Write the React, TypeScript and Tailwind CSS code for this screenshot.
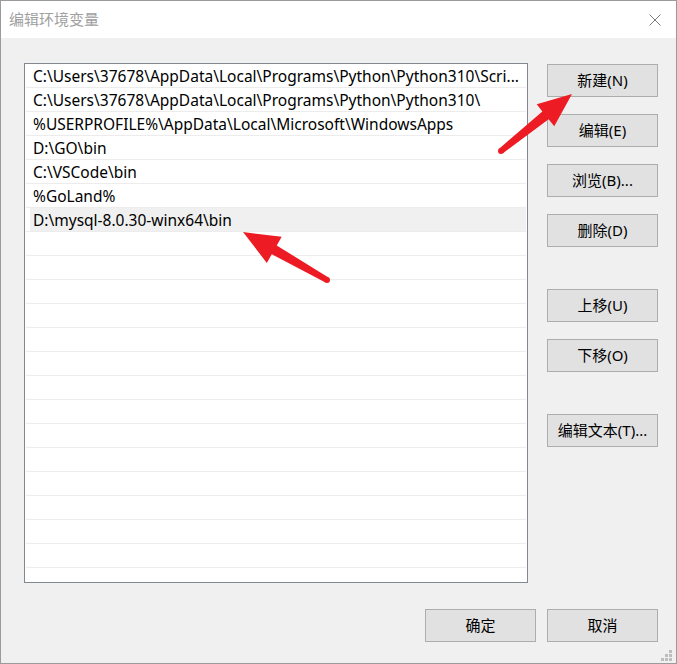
import React from 'react';

const paths = [
  'C:\\Users\\37678\\AppData\\Local\\Programs\\Python\\Python310\\Scri...',
  'C:\\Users\\37678\\AppData\\Local\\Programs\\Python\\Python310\\',
  '%USERPROFILE%\\AppData\\Local\\Microsoft\\WindowsApps',
  'D:\\GO\\bin',
  'C:\\VSCode\\bin',
  '%GoLand%',
  'D:\\mysql-8.0.30-winx64\\bin',
];

const SELECTED = 6;
const TOTAL_ROWS = 22;

// red annotation arrow: tapered shaft + triangular head
function arrowPoints(tail: [number, number], tip: [number, number], headLen: number, headW: number) {
  const dx = tip[0] - tail[0];
  const dy = tip[1] - tail[1];
  const len = Math.hypot(dx, dy);
  const ux = dx / len;
  const uy = dy / len;
  const nx = -uy;
  const ny = ux;
  const bx = tip[0] - ux * headLen;
  const by = tip[1] - uy * headLen;
  const sw = 5;
  const pts = [
    [tail[0] + nx * 3, tail[1] + ny * 3],
    [bx + nx * sw, by + ny * sw],
    [bx + nx * (headW / 2), by + ny * (headW / 2)],
    [tip[0], tip[1]],
    [bx - nx * (headW / 2), by - ny * (headW / 2)],
    [bx - nx * sw, by - ny * sw],
    [tail[0] - nx * 3, tail[1] - ny * 3],
  ];
  return pts.map((p) => p.join(',')).join(' ');
}

function Arrows() {
  return (
    <svg className="absolute inset-0 pointer-events-none" width="677" height="664">
      <g fill="#ed1c24">
        <polygon points={arrowPoints([500, 150], [571, 93], 34, 28)} />
        <circle cx="500" cy="150" r="3" />
        <polygon points={arrowPoints([326, 279], [242, 231], 36, 30)} />
        <circle cx="326" cy="279" r="3" />
      </g>
    </svg>
  );
}

function WinButton({ children }: { children: React.ReactNode }) {
  return (
    <button className="w-[111px] h-[33px] bg-[#e1e1e1] border border-[#adadad] text-[15px] text-black flex items-center justify-center leading-none">
      {children}
    </button>
  );
}

export default function App() {
  return (
    <div
      className="relative w-[677px] h-[664px] border border-[#9b9b9b] bg-[#f0f0f0] flex flex-col overflow-hidden"
      style={{ fontFamily: '"Noto Sans", "Noto Sans CJK SC", sans-serif' }}
    >
      {/* title bar */}
      <div className="h-[37px] bg-white flex items-center justify-between pl-[8px] pr-[15px] shrink-0">
        <span className="text-[15px] text-[#a0a0a0]">编辑环境变量</span>
        <svg width="12" height="12" viewBox="0 0 12 12" className="mt-[1px]">
          <path d="M0.5 0.5 L11.5 11.5 M11.5 0.5 L0.5 11.5" stroke="#7a7a7a" strokeWidth="1" />
        </svg>
      </div>

      <div className="flex-1 flex flex-col pt-[25px] pl-[23px] pr-[18px]">
        <div className="flex">
          {/* list */}
          <div className="w-[504px] h-[520px] border border-[#828790] bg-white overflow-hidden">
            {Array.from({ length: TOTAL_ROWS }).map((_, i) => (
              <div key={i} className="h-[24px] px-[1px] flex flex-col">
                <div
                  className={`flex-1 flex items-center pt-[2px] text-[15.5px] text-black whitespace-nowrap overflow-hidden ${
                    i === SELECTED ? 'bg-[#f0f0f0] ml-[4px] pl-[3px]' : 'pl-[7px]'
                  }`}
                >
                  {paths[i] ?? ''}
                </div>
                <div className="h-[1px] bg-[#ececec]" />
              </div>
            ))}
          </div>

          {/* right buttons */}
          <div className="ml-[19px] pt-[1px] flex flex-col">
            <div className="flex flex-col gap-[17px]">
              <WinButton>新建(N)</WinButton>
              <WinButton>编辑(E)</WinButton>
              <WinButton>浏览(B)...</WinButton>
              <WinButton>删除(D)</WinButton>
            </div>
            <div className="flex flex-col gap-[17px] mt-[42px]">
              <WinButton>上移(U)</WinButton>
              <WinButton>下移(O)</WinButton>
            </div>
            <div className="mt-[42px]">
              <WinButton>编辑文本(T)...</WinButton>
            </div>
          </div>
        </div>

        <div className="flex justify-end gap-[11px] mt-[26px]">
          <WinButton>确定</WinButton>
          <WinButton>取消</WinButton>
        </div>
      </div>

      {/* resize grip */}
      <svg className="absolute right-[4px] bottom-[2px]" width="11" height="11" viewBox="0 0 11 11">
        <g fill="#bdbdbd">
          <rect x="8" y="0" width="3" height="3" />
          <rect x="4" y="4" width="3" height="3" />
          <rect x="8" y="4" width="3" height="3" />
          <rect x="0" y="8" width="3" height="3" />
          <rect x="4" y="8" width="3" height="3" />
          <rect x="8" y="8" width="3" height="3" />
        </g>
      </svg>

      <Arrows />
    </div>
  );
}
